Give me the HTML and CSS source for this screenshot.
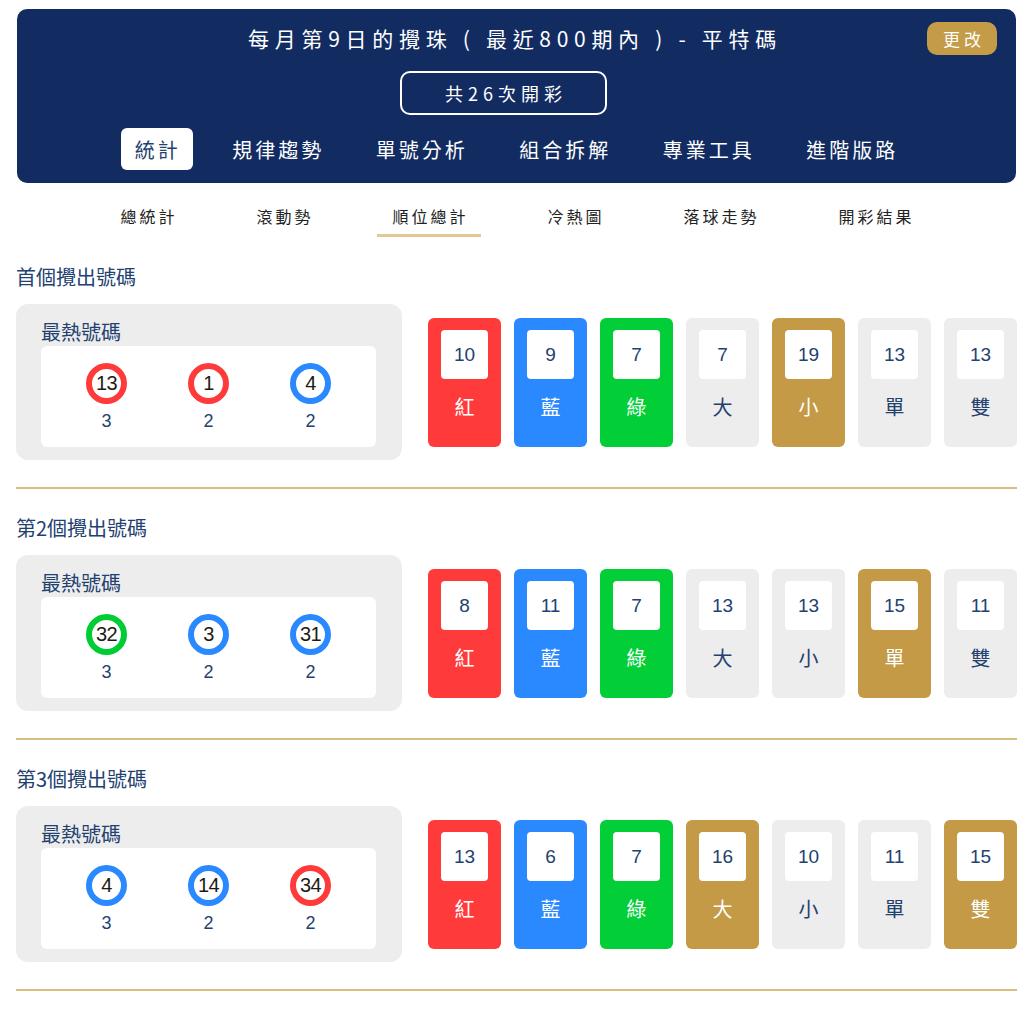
FILE: index.html
```html
<!DOCTYPE html>
<html lang="zh-Hant">
<head>
<meta charset="utf-8">
<title>每月第9日的攪珠</title>
<link rel="stylesheet" href="styles.css">
</head>
<body>
<div class="page">
  <header class="hero">
    <h1 class="hero-title">每月第9日的攪珠 ( 最近800期內 ) - 平特碼</h1>
    <button class="change-btn">更改</button>
    <div class="count-box">共26次開彩</div>
    <nav class="main-tabs">
      <span class="main-tab active">統計</span>
      <span class="main-tab">規律趨勢</span>
      <span class="main-tab">單號分析</span>
      <span class="main-tab">組合拆解</span>
      <span class="main-tab">專業工具</span>
      <span class="main-tab">進階版路</span>
    </nav>
  </header>

  <nav class="sub-tabs">
    <span class="sub-tab">總統計</span>
    <span class="sub-tab">滾動勢</span>
    <span class="sub-tab active">順位總計</span>
    <span class="sub-tab">冷熱圖</span>
    <span class="sub-tab">落球走勢</span>
    <span class="sub-tab">開彩結果</span>
  </nav>

  <section class="block">
    <h2 class="block-title">首個攪出號碼</h2>
    <div class="block-body">
      <div class="hot-card">
        <div class="hot-title">最熱號碼</div>
        <div class="hot-inner">
          <div class="hot-item"><span class="ball red">13</span><span class="hot-count">3</span></div>
          <div class="hot-item"><span class="ball red">1</span><span class="hot-count">2</span></div>
          <div class="hot-item"><span class="ball blue">4</span><span class="hot-count">2</span></div>
        </div>
      </div>
      <div class="stats">
        <div class="stat red"><span class="stat-num">10</span><span class="stat-label">紅</span></div>
        <div class="stat blue"><span class="stat-num">9</span><span class="stat-label">藍</span></div>
        <div class="stat green"><span class="stat-num">7</span><span class="stat-label">綠</span></div>
        <div class="stat grey"><span class="stat-num">7</span><span class="stat-label">大</span></div>
        <div class="stat gold"><span class="stat-num">19</span><span class="stat-label">小</span></div>
        <div class="stat grey"><span class="stat-num">13</span><span class="stat-label">單</span></div>
        <div class="stat grey"><span class="stat-num">13</span><span class="stat-label">雙</span></div>
      </div>
    </div>
  </section>

  <section class="block">
    <h2 class="block-title">第2個攪出號碼</h2>
    <div class="block-body">
      <div class="hot-card">
        <div class="hot-title">最熱號碼</div>
        <div class="hot-inner">
          <div class="hot-item"><span class="ball green">32</span><span class="hot-count">3</span></div>
          <div class="hot-item"><span class="ball blue">3</span><span class="hot-count">2</span></div>
          <div class="hot-item"><span class="ball blue">31</span><span class="hot-count">2</span></div>
        </div>
      </div>
      <div class="stats">
        <div class="stat red"><span class="stat-num">8</span><span class="stat-label">紅</span></div>
        <div class="stat blue"><span class="stat-num">11</span><span class="stat-label">藍</span></div>
        <div class="stat green"><span class="stat-num">7</span><span class="stat-label">綠</span></div>
        <div class="stat grey"><span class="stat-num">13</span><span class="stat-label">大</span></div>
        <div class="stat grey"><span class="stat-num">13</span><span class="stat-label">小</span></div>
        <div class="stat gold"><span class="stat-num">15</span><span class="stat-label">單</span></div>
        <div class="stat grey"><span class="stat-num">11</span><span class="stat-label">雙</span></div>
      </div>
    </div>
  </section>

  <section class="block">
    <h2 class="block-title">第3個攪出號碼</h2>
    <div class="block-body">
      <div class="hot-card">
        <div class="hot-title">最熱號碼</div>
        <div class="hot-inner">
          <div class="hot-item"><span class="ball blue">4</span><span class="hot-count">3</span></div>
          <div class="hot-item"><span class="ball blue">14</span><span class="hot-count">2</span></div>
          <div class="hot-item"><span class="ball red">34</span><span class="hot-count">2</span></div>
        </div>
      </div>
      <div class="stats">
        <div class="stat red"><span class="stat-num">13</span><span class="stat-label">紅</span></div>
        <div class="stat blue"><span class="stat-num">6</span><span class="stat-label">藍</span></div>
        <div class="stat green"><span class="stat-num">7</span><span class="stat-label">綠</span></div>
        <div class="stat gold"><span class="stat-num">16</span><span class="stat-label">大</span></div>
        <div class="stat grey"><span class="stat-num">10</span><span class="stat-label">小</span></div>
        <div class="stat grey"><span class="stat-num">11</span><span class="stat-label">單</span></div>
        <div class="stat gold"><span class="stat-num">15</span><span class="stat-label">雙</span></div>
      </div>
    </div>
  </section>
</div>
</body>
</html>
```

FILE: styles.css
```css
* { box-sizing: border-box; }

body {
  margin: 0;
  background: #ffffff;
  font-family: "Liberation Sans", "Noto Sans CJK TC", sans-serif;
  color: #23416f;
}

.page {
  width: 1001px;
  margin-left: 16px;
  padding-top: 9px;
}

/* Header */
.hero {
  position: relative;
  margin: 0 1px;
  background: #122c62;
  border-radius: 10px;
  padding: 14px 0 13px;
  display: flex;
  flex-direction: column;
  align-items: center;
}

.hero-title {
  margin: 0;
  font-family: "Noto Sans CJK TC", "Liberation Sans", sans-serif;
  font-weight: 400;
  font-size: 21px;
  line-height: 30px;
  letter-spacing: 5.7px;
  color: #ffffff;
  padding-right: 3px;
}

.change-btn {
  position: absolute;
  top: 13px;
  right: 19px;
  width: 70px;
  height: 33px;
  border: none;
  border-radius: 10px;
  background: #c49b47;
  color: #ffffff;
  font-family: "Noto Sans CJK TC", sans-serif;
  font-size: 17px;
  letter-spacing: 4px;
  padding: 0 0 0 4px;
}

.count-box {
  margin-top: 18px;
  margin-right: 26px;
  width: 207px;
  height: 44px;
  border: 2px solid #ffffff;
  border-radius: 10px;
  display: flex;
  align-items: center;
  justify-content: center;
  color: #ffffff;
  font-family: "Noto Sans CJK TC", "Liberation Sans", sans-serif;
  font-size: 18px;
  letter-spacing: 5px;
  padding-left: 5px;
}

.main-tabs {
  margin-top: 13px;
  margin-right: 2px;
  display: flex;
  gap: 25.5px;
}

.main-tab {
  height: 42px;
  padding: 0 12px 0 14px;
  display: flex;
  align-items: center;
  border-radius: 6px;
  color: #ffffff;
  font-family: "Noto Sans CJK TC", sans-serif;
  font-size: 20px;
  letter-spacing: 3px;
}

.main-tab.active {
  background: #ffffff;
  color: #23416f;
}

/* Sub tabs */
.sub-tabs {
  margin-top: 15px;
  display: flex;
  justify-content: center;
  gap: 52px;
  padding-right: 1px;
}

.sub-tab {
  padding: 6px 12px 6px 15px;
  line-height: 24px;
  border-bottom: 3px solid transparent;
  font-family: "Noto Sans CJK TC", sans-serif;
  font-size: 16px;
  letter-spacing: 3px;
  color: #222222;
}

.sub-tab.active {
  border-bottom-color: #e2c991;
}

/* Sections */
.block {
  padding-top: 26px;
  padding-bottom: 27px;
  border-bottom: 2px solid #d8bd83;
}

.block + .block {
  padding-top: 25px;
}

.block-title {
  margin: 0;
  font-family: "Noto Sans CJK TC", sans-serif;
  font-weight: 400;
  font-size: 20px;
  line-height: 28px;
  color: #23416f;
}

.block-body {
  margin-top: 13px;
  display: flex;
  align-items: center;
  gap: 26px;
}

.hot-card {
  width: 386px;
  flex: none;
  background: #ededed;
  border-radius: 12px;
  padding: 14px 26px 13px 25px;
}

.hot-title {
  font-family: "Noto Sans CJK TC", sans-serif;
  font-size: 20px;
  line-height: 28px;
  color: #23416f;
}

.hot-inner {
  height: 101px;
  background: #ffffff;
  border-radius: 6px;
  display: flex;
  justify-content: center;
  gap: 61px;
  padding-top: 17px;
}

.hot-item {
  display: flex;
  flex-direction: column;
  align-items: center;
  width: 41px;
}

.ball {
  width: 41px;
  height: 41px;
  border-radius: 50%;
  border: 6px solid #ff3b3b;
  background: #ffffff;
  display: flex;
  align-items: center;
  justify-content: center;
  font-size: 20px;
  color: #1f1a14;
  letter-spacing: -0.5px;
}

.ball.red { border-color: #ff3a3a; }
.ball.blue { border-color: #2a89ff; }
.ball.green { border-color: #00cc33; }

.hot-count {
  margin-top: 5px;
  font-size: 18px;
  line-height: 24px;
  color: #23416f;
}

.stats {
  flex: 1;
  display: grid;
  grid-template-columns: repeat(7, 1fr);
  gap: 13px;
}

.stat {
  height: 129px;
  border-radius: 6px;
  padding-top: 12px;
  display: flex;
  flex-direction: column;
  align-items: center;
}

.stat.red { background: #ff3a3a; }
.stat.blue { background: #2a89ff; }
.stat.green { background: #02cf38; }
.stat.gold { background: #c49a46; }
.stat.grey { background: #ededed; }

.stat-num {
  width: 47px;
  height: 49px;
  background: #ffffff;
  border-radius: 4px;
  display: flex;
  align-items: center;
  justify-content: center;
  font-size: 19px;
  color: #23416f;
  padding-top: 1px;
}

.stat-label {
  margin-top: 14px;
  font-family: "Noto Sans CJK TC", sans-serif;
  font-size: 20px;
  line-height: 28px;
  color: #ffffff;
}

.stat.grey .stat-label { color: #23416f; }
```
